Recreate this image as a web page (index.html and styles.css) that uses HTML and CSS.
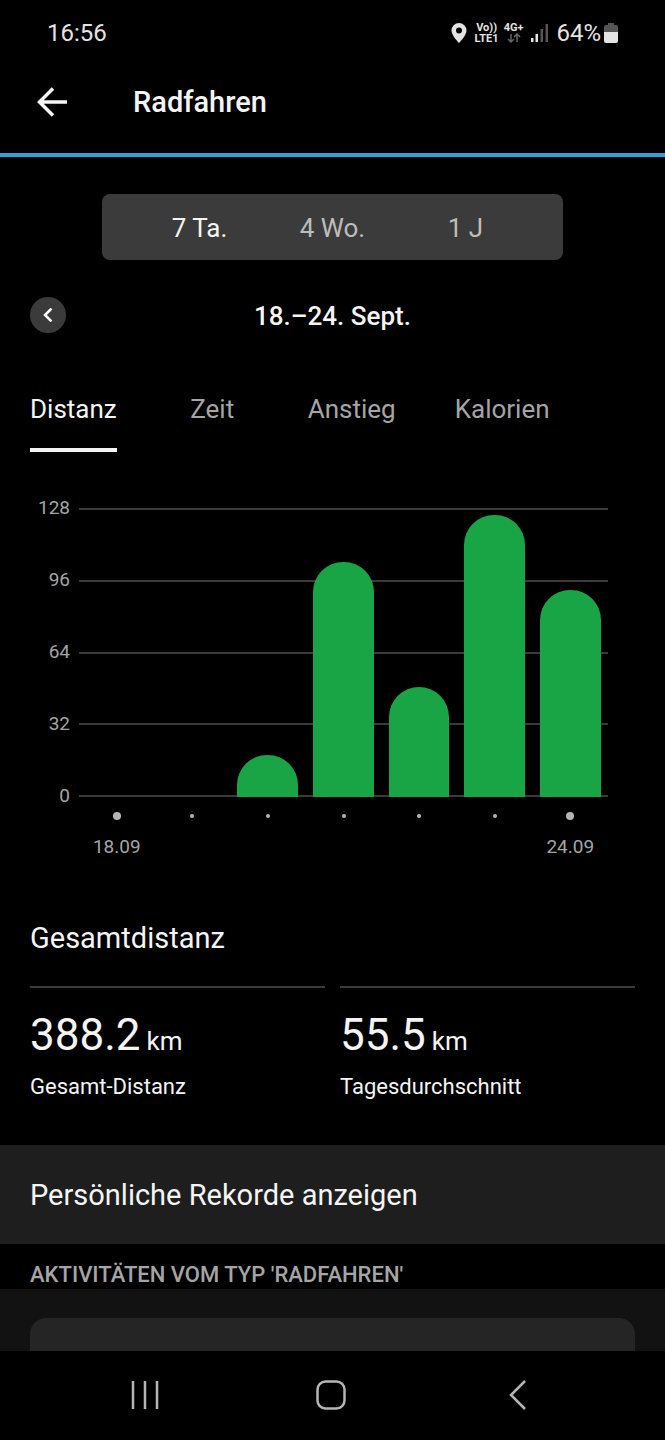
FILE: index.html
```html
<!DOCTYPE html>
<html lang="de">
<head>
    <meta charset="UTF-8">
    <meta name="viewport" content="width=device-width, initial-scale=1.0">
    <title>Radfahren</title>
    <link rel="stylesheet" href="styles.css">
</head>
<body>
    <div class="statusbar">
        <span class="clock">16:56</span>
        <div class="status-icons">
            <svg class="icon-pin" width="16" height="20" viewBox="0 0 16 20" aria-hidden="true"><path fill-rule="evenodd" d="M8 0a7.5 7.5 0 0 0-7.500 7.500C.5 12.500 8 20 8 20s7.500-7.500 7.500-12.500A7.500 7.500 0 0 0 8 0zm0 4.500a3 3 0 1 1 0 6 3 3 0 0 1 0-6z"/></svg>
            <div class="nets">
                <span class="net"><span>Vo))</span><span>LTE1</span></span>
                <span class="net">
                    <span>4G+</span>
                    <svg width="14" height="10" viewBox="0 0 14 10" aria-hidden="true"><path class="arrows" d="M4 1v8M1 6l3 3 3-3M10 9V1M7 4l3-3 3 3"/></svg>
                </span>
            </div>
            <svg width="17" height="18" viewBox="0 0 17 18" aria-hidden="true"><path d="M0 14h2.500v4H0zM4.500 10H7v8H4.500z"/><path class="dim" d="M9.500 5H12v13H9.500zM14.500 0H17v18h-2.500z"/></svg>
            <div class="power">
                <span>64%</span>
                <svg width="14" height="20" viewBox="0 0 14 20" aria-hidden="true"><path class="dim" d="M4 0h6v2h2a2 2 0 0 1 2 2v5H0V4a2 2 0 0 1 2-2h2z"/><path d="M0 9h14v9a2 2 0 0 1-2 2H2a2 2 0 0 1-2-2z"/></svg>
            </div>
        </div>
    </div>

    <header class="appbar">
        <button type="button" class="back" aria-label="Zurück">
            <svg width="30" height="30" viewBox="0 0 30 30" aria-hidden="true"><path d="M30 15H2M16 1.500L2.500 15 16 28.500"/></svg>
        </button>
        <h1>Radfahren</h1>
    </header>

    <main>
        <div class="range">
            <button type="button" class="active">7 Ta.</button>
            <button type="button">4 Wo.</button>
            <button type="button">1 J</button>
        </div>

        <div class="period">
            <button type="button" class="prev" aria-label="Vorherige Woche">
                <svg width="10" height="14" viewBox="0 0 10 14" aria-hidden="true"><path d="M8.500 .5L2 7l6.500 6.500"/></svg>
            </button>
            <h2>18.–24. Sept.</h2>
        </div>

        <nav class="tabs">
            <button type="button" class="active">Distanz</button>
            <button type="button">Zeit</button>
            <button type="button">Anstieg</button>
            <button type="button">Kalorien</button>
        </nav>

        <section class="chart">
            <div class="y-axis"><span>128</span><span>96</span><span>64</span><span>32</span><span>0</span></div>
            <div class="plot">
                <div class="lines"><i></i><i></i><i></i><i></i><i></i></div>
                <div class="bars">
                    <div class="bar" style="height: 0%"></div>
                    <div class="bar" style="height: 0%"></div>
                    <div class="bar" style="height: 14.5%"></div>
                    <div class="bar" style="height: 81.3%"></div>
                    <div class="bar" style="height: 37.9%"></div>
                    <div class="bar" style="height: 97.7%"></div>
                    <div class="bar" style="height: 71.5%"></div>
                </div>
            </div>
            <div class="x-axis">
                <div class="day end"><i></i><span>18.09</span></div>
                <div class="day"><i></i></div>
                <div class="day"><i></i></div>
                <div class="day"><i></i></div>
                <div class="day"><i></i></div>
                <div class="day"><i></i></div>
                <div class="day end"><i></i><span>24.09</span></div>
            </div>
        </section>

        <section class="totals">
            <h3>Gesamtdistanz</h3>
            <div class="stats">
                <div class="stat">
                    <p class="value"><span>388.2</span> <small>km</small></p>
                    <p class="caption">Gesamt-Distanz</p>
                </div>
                <div class="stat">
                    <p class="value"><span>55.5</span> <small>km</small></p>
                    <p class="caption">Tagesdurchschnitt</p>
                </div>
            </div>
        </section>

        <a class="records" href="#">Persönliche Rekorde anzeigen</a>
        <h4 class="list-title">AKTIVITÄTEN VOM TYP 'RADFAHREN'</h4>
        <div class="list"><div class="card"></div></div>
    </main>

    <footer class="navbar">
        <button type="button" aria-label="Letzte Apps"><svg width="30" height="30" viewBox="0 0 30 30" aria-hidden="true"><path d="M3 1v28M15 1v28M27 1v28"/></svg></button>
        <button type="button" aria-label="Startbildschirm"><svg width="30" height="30" viewBox="0 0 30 30" aria-hidden="true"><rect x="1.500" y="1.500" width="27" height="27" rx="8"/></svg></button>
        <button type="button" aria-label="Zurück"><svg width="30" height="30" viewBox="0 0 30 30" aria-hidden="true"><path d="M23 1L9 15l14 14"/></svg></button>
    </footer>
</body>
</html>
```
FILE: styles.css
```css
* { box-sizing: border-box; }
body { display: flex; flex-direction: column; min-height: 100vh; margin: 0; background-color: #000; color: #f4f4f4; font-family: Roboto, "Liberation Sans", sans-serif; font-size: 26px; line-height: 32px; }
h1, h2, h3, h4, p { margin: 0; font-weight: 400; }
button { padding: 0; border: none; background: none; color: inherit; font: inherit; cursor: pointer; }
svg { display: block; flex: none; }
main { display: flex; flex-direction: column; flex: 1; }

/* status bar */
.statusbar { display: flex; justify-content: space-between; align-items: center; height: 66px; padding: 0 47px; color: #e4e4e4; font-size: 24px; }
.status-icons { display: flex; align-items: center; gap: 8px; }
.status-icons svg { fill: #e4e4e4; }
.status-icons .dim { fill: #555; }
.nets { display: flex; gap: 5px; }
.net { display: flex; flex-direction: column; align-items: center; font-size: 11px; font-weight: 700; line-height: 11px; }
.status-icons .arrows { fill: none; stroke: #666; stroke-width: 1.5; }
.power { display: flex; align-items: center; gap: 3px; }

/* app bar */
.appbar { display: flex; align-items: center; gap: 66px; height: 91px; padding: 0 37px 16px; border-bottom: 4px solid #3a9fd6; }
.appbar h1 { font-size: 29px; font-weight: 500; }
.back svg { fill: none; stroke: #f4f4f4; stroke-width: 3.5; }

/* range and period */
.range { display: flex; margin: 37px 102px 0; padding: 0 31px; border-radius: 8px; background-color: #3b3b3b; color: #bdbdbd; }
.range button { flex: 1; height: 66px; padding-top: 2px; }
.range .active, .tabs .active { color: #f4f4f4; }
.period { display: grid; grid-template-columns: 36px 1fr 36px; align-items: center; margin: 37px 30px 0; text-align: center; }
.period h2 { padding-top: 2px; font-size: 26px; font-weight: 500; }
.prev { display: grid; place-items: center; height: 36px; border-radius: 50%; background-color: #3b3b3b; }
.prev svg { fill: none; stroke: #fff; stroke-width: 2.5; }

/* tabs */
.tabs { display: flex; gap: 59px; margin: 60px 30px 0; color: #a5a5a5; }
.tabs button { min-width: 73px; height: 59px; padding-bottom: 24px; border-bottom: 4px solid transparent; }
.tabs .active { border-bottom-color: #f4f4f4; }

/* chart */
.chart { display: grid; grid-template-columns: 40px 1fr; column-gap: 9px; margin: 56px 57px 0 30px; color: #a5a5a5; font-size: 19px; line-height: 24px; }
.y-axis { display: flex; flex-direction: column; justify-content: space-between; margin: -12px 0 -11px; text-align: right; }
.plot { display: grid; height: 289px; }
.lines, .bars { grid-area: 1 / 1; display: flex; }
.lines { flex-direction: column; justify-content: space-between; }
.lines i { height: 2px; background-color: #3a3a3a; }
.bars { align-items: flex-end; justify-content: space-around; }
.bar { width: 11.5%; border-radius: 30px 30px 0 0; background-color: #19a546; }
.x-axis { grid-column: 2; display: flex; margin-top: 14px; }
.day { display: flex; flex: 1; flex-direction: column; align-items: center; gap: 14px; }
.day i { width: 4px; height: 4px; margin: 3px 0; border-radius: 50%; background-color: #b5b5b5; }
.day.end i { width: 8px; height: 8px; margin: 1px 0; }

/* totals */
.totals { padding: 61px 30px 44px; }
.totals h3, .records { font-size: 29px; line-height: 36px; }
.stats { display: grid; grid-template-columns: 1fr 1fr; gap: 15px; margin-top: 30px; }
.stat { padding-top: 21px; border-top: 2px solid #3a3a3a; }
.value { display: flex; align-items: baseline; gap: 6px; font-size: 44px; line-height: 52px; }
.value small { font-size: 26px; line-height: 32px; }
.caption { margin-top: 12px; font-size: 22px; line-height: 28px; }

/* activities */
.records { display: block; padding: 32px 30px 31px; background-color: #1e1e1e; color: inherit; text-decoration: none; }
.list-title { padding: 17px 30px 0; color: #a5a5a5; font-size: 22px; font-weight: 500; line-height: 28px; }
.list { display: flex; flex: 1; min-height: 62px; padding: 29px 30px 0; background-color: #121212; }
.card { flex: 1; border-radius: 16px 16px 0 0; background-color: #252525; }

/* navigation */
.navbar { display: flex; justify-content: space-between; align-items: center; height: 89px; padding: 0 133px 2px 130px; }
.navbar svg { fill: none; stroke: #b5b5b5; stroke-width: 2.5; }
```
